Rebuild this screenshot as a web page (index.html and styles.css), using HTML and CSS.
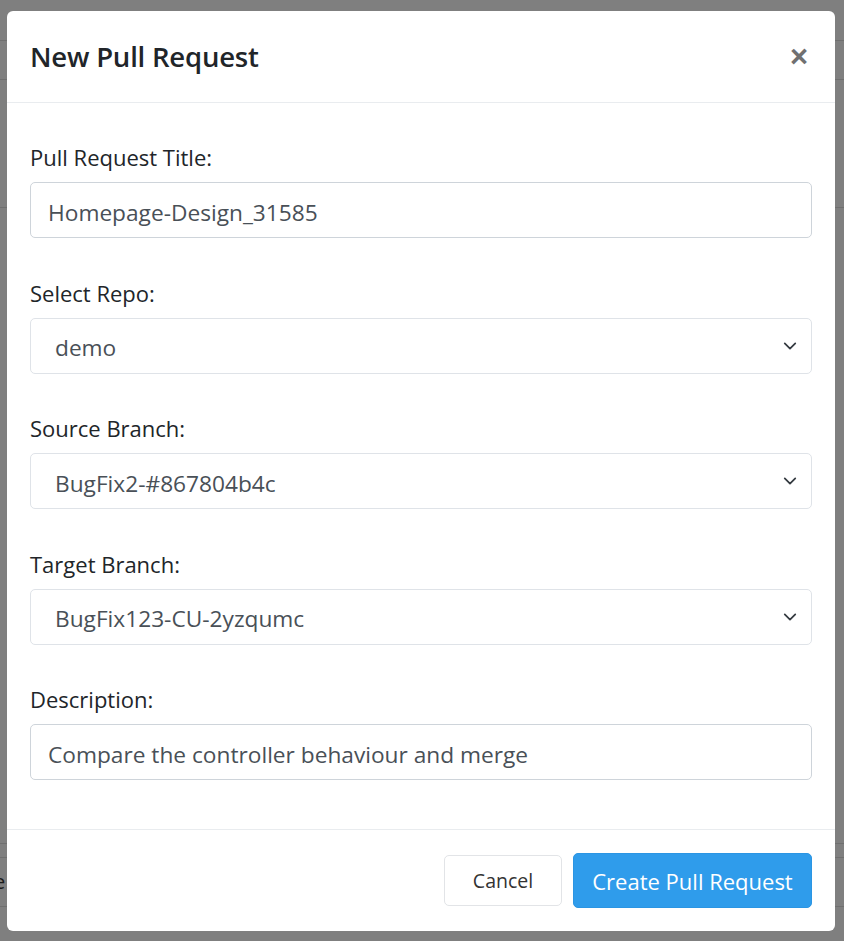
FILE: index.html
```html
<!DOCTYPE html>
<html lang="en">
<head>
<meta charset="utf-8">
<title>New Pull Request</title>
<link rel="stylesheet" href="styles.css">
</head>
<body>
<div class="page">
  <div class="bg-lines">
    <div class="bg-row r1"></div>
    <div class="bg-row r2"></div>
    <div class="bg-row r3"></div>
    <div class="bg-row r4"></div>
    <div class="bg-row r5"></div>
    <div class="bg-row r6"></div>
    <div class="bg-text">e</div>
  </div>
  <div class="modal">
    <div class="modal-header">
      <h5 class="modal-title">New Pull Request</h5>
      <button class="close" type="button">&times;</button>
    </div>
    <div class="modal-body">
      <div class="group">
        <label class="label">Pull Request Title:</label>
        <div class="control input">Homepage-Design_31585</div>
      </div>
      <div class="group">
        <label class="label">Select Repo:</label>
        <div class="control select">demo<svg class="chev" viewBox="0 0 16 16" width="14" height="14"><path d="M2 5l6 6 6-6" fill="none" stroke="#343a40" stroke-width="2" stroke-linecap="round" stroke-linejoin="round"/></svg></div>
      </div>
      <div class="group">
        <label class="label">Source Branch:</label>
        <div class="control select">BugFix2-#867804b4c<svg class="chev" viewBox="0 0 16 16" width="14" height="14"><path d="M2 5l6 6 6-6" fill="none" stroke="#343a40" stroke-width="2" stroke-linecap="round" stroke-linejoin="round"/></svg></div>
      </div>
      <div class="group">
        <label class="label">Target Branch:</label>
        <div class="control select">BugFix123-CU-2yzqumc<svg class="chev" viewBox="0 0 16 16" width="14" height="14"><path d="M2 5l6 6 6-6" fill="none" stroke="#343a40" stroke-width="2" stroke-linecap="round" stroke-linejoin="round"/></svg></div>
      </div>
      <div class="group">
        <label class="label">Description:</label>
        <div class="control input">Compare the controller behaviour and merge</div>
      </div>
    </div>
    <div class="modal-footer">
      <button class="btn btn-cancel" type="button">Cancel</button>
      <button class="btn btn-primary" type="button">Create Pull Request</button>
    </div>
  </div>
</div>
</body>
</html>
```
FILE: styles.css
```css
html, body {
  margin: 0;
  padding: 0;
}
body {
  background: #7f7f7f;
  font-family: "Open Sans", "Noto Sans", "Liberation Sans", sans-serif;
  color: #212529;
  width: 844px;
  height: 941px;
  overflow: hidden;
}
.page {
  position: relative;
  width: 844px;
  height: 941px;
  padding-top: 11px;
  box-sizing: border-box;
}
.bg-lines {
  position: absolute;
  inset: 0;
}
.bg-row {
  position: absolute;
  left: 0;
  right: 0;
  height: 1px;
  background: #6f6f6f;
}
.r1 { top: 40px; }
.r2 { top: 79px; }
.r3 { top: 207px; }
.r4 { top: 843px; }
.r5 { top: 857px; }
.r6 { top: 906px; }
.bg-text {
  position: absolute;
  left: -6px;
  top: 868px;
  font-size: 20px;
  color: #1b1b1b;
}
.modal {
  position: relative;
  margin-left: 7px;
  width: 828px;
  height: 920px;
  background: #fff;
  border-radius: 6px;
  display: flex;
  flex-direction: column;
}
.modal-header {
  height: 92px;
  box-sizing: border-box;
  border-bottom: 1px solid #e9ecef;
  display: flex;
  align-items: center;
  justify-content: space-between;
  padding: 0 27px 0 23px;
}
.modal-title {
  margin: 0;
  font-size: 27.5px;
  font-weight: 600;
  color: #212529;
  letter-spacing: -0.2px;
}
.close {
  border: 0;
  background: none;
  padding: 0;
  font-family: "Liberation Sans", sans-serif;
  font-size: 31px;
  font-weight: 700;
  color: #707070;
  line-height: 1;
}
.modal-body {
  padding: 39px 23px 48px 23px;
  flex: 1;
}
.group {
  margin-bottom: 39.5px;
}
.group:last-child {
  margin-bottom: 0;
}
.label {
  display: block;
  font-size: 22px;
  line-height: 30px;
  margin-bottom: 10px;
  color: #212529;
}
.control {
  height: 56px;
  box-sizing: border-box;
  border: 1px solid #ced4da;
  border-radius: 5px;
  display: flex;
  align-items: center;
  font-size: 22.7px;
  color: #495057;
  padding-left: 17px;
  padding-top: 4px;
}
.select {
  padding-left: 24px;
  padding-right: 14px;
  justify-content: space-between;
  border-color: #dfe3e8;
}
.chev {
  flex: none;
  margin-top: -4px;
}
.modal-footer {
  border-top: 1px solid #e9ecef;
  height: 102px;
  box-sizing: border-box;
  display: flex;
  align-items: center;
  justify-content: flex-end;
  padding: 0 23px 0 0;
  gap: 11px;
}
.btn {
  font-family: inherit;
  border-radius: 5px;
  cursor: pointer;
}
.btn-cancel {
  width: 118px;
  height: 51px;
  background: #fff;
  border: 1px solid #e2e4e7;
  color: #333;
  font-size: 19.5px;
}
.btn-primary {
  width: 239px;
  height: 55px;
  background: #2f9ceb;
  border: 1px solid #2b95e3;
  color: #fff;
  font-size: 22px;
}
```
